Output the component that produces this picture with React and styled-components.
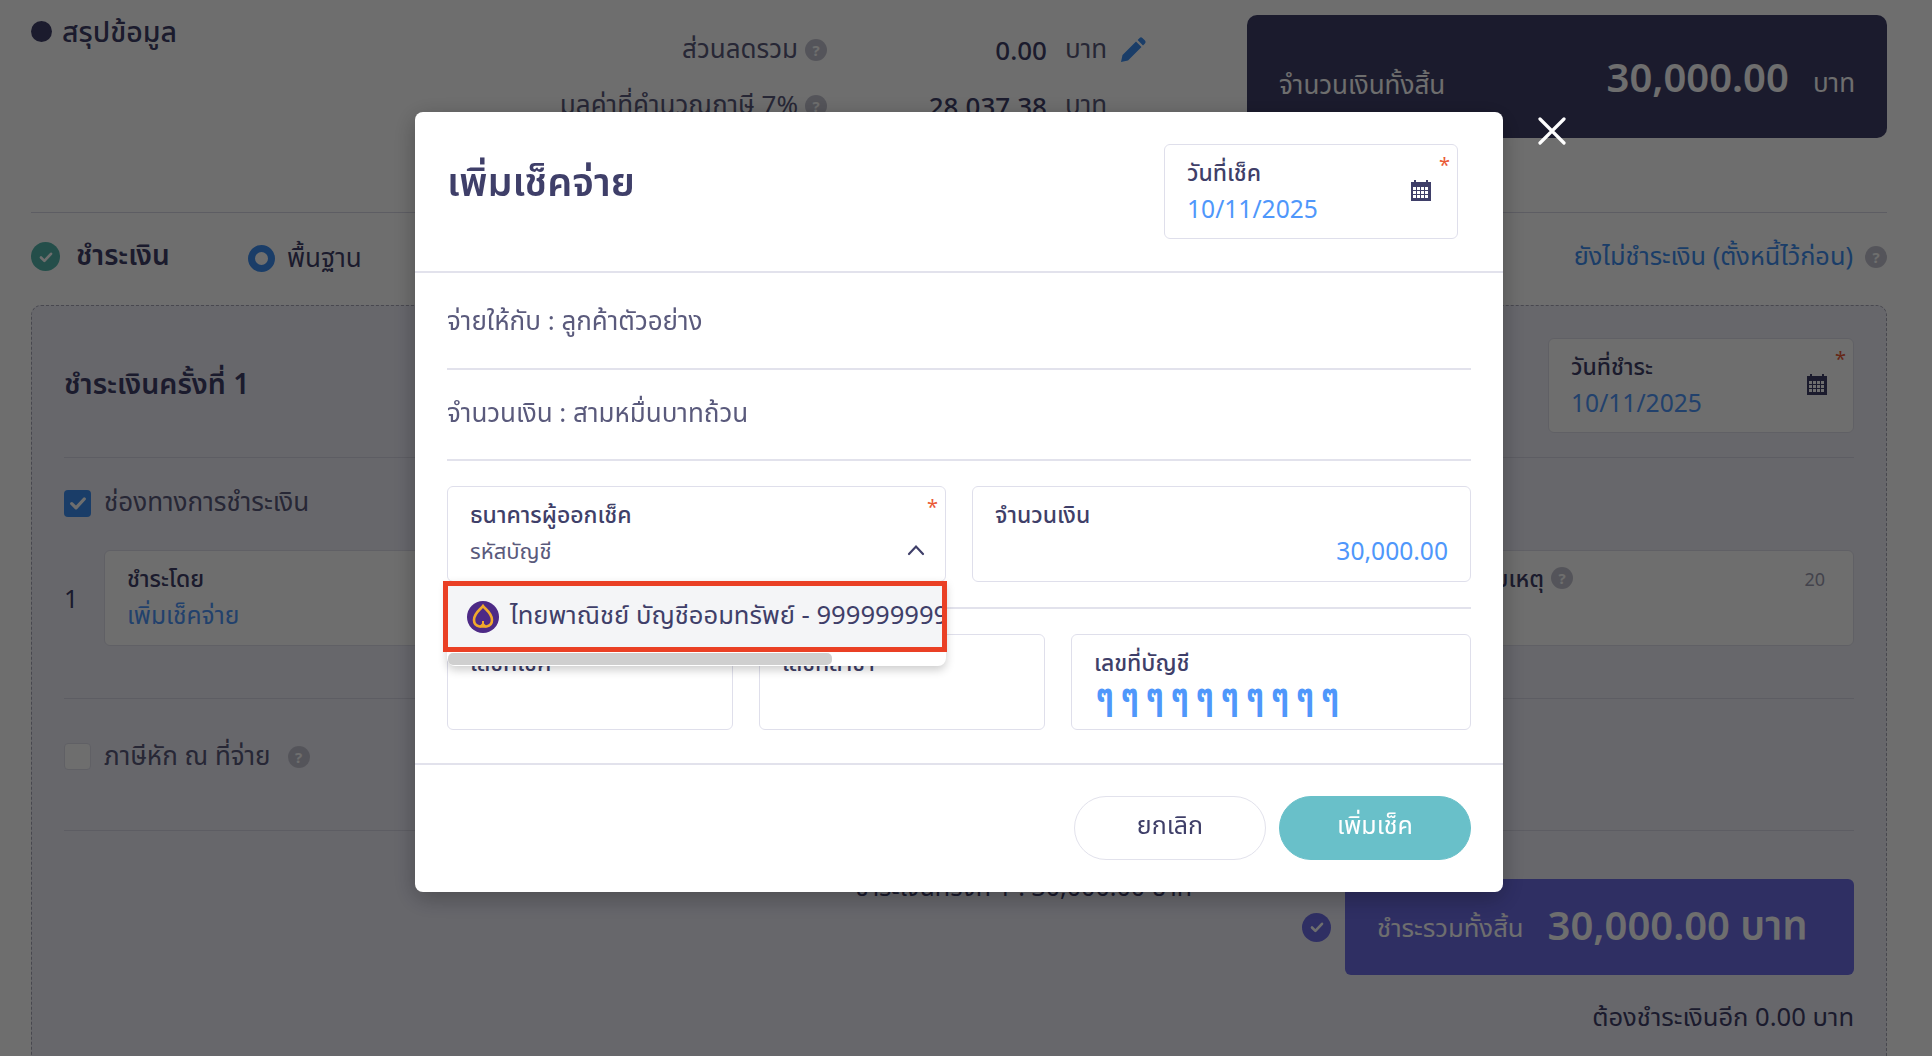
import React from 'react';
import styled, { createGlobalStyle } from 'styled-components';

const GlobalStyle = createGlobalStyle`
  html, body {
    margin: 0;
    padding: 0;
    height: 100%;
    overflow: hidden;
    background: #fff;
    font-family: 'Noto Sans', 'Noto Sans Thai', sans-serif;
    color: #3f3f69;
  }
`;

const Page = styled.div`
  width: 1932px;
  height: 1056px;
  overflow: hidden;
  padding: 15px 45px 0 31px;
  box-sizing: border-box;
`;

const Summary = styled.section`
  display: flex;
  height: 198px;
  box-sizing: border-box;
  border-bottom: 1px solid #d8d8e6;
`;

const SummaryTitle = styled.div`
  display: flex;
  flex: none;
  align-items: center;
  gap: 10px;
  height: 32px;
  font-size: 28.5px;
  font-weight: 500;
  line-height: 32px;
  white-space: nowrap;
`;

const Dot = styled.span`
  width: 21px;
  height: 21px;
  border-radius: 50%;
  background: #3f3f69;
`;

const SummaryRows = styled.div`
  margin-left: auto;
  margin-right: 100px;
  display: flex;
  flex-direction: column;
  gap: 26px;
  padding-top: 15px;
`;

const SummaryRow = styled.div`
  display: grid;
  grid-template-columns: 400px 29px 220px 72px 28px;
  align-items: center;
  height: 30px;
  font-size: 26px;
  color: #5a5a7c;
`;

const RowLabel = styled.span`
  text-align: right;
  white-space: nowrap;
`;

const RowValue = styled.span`
  text-align: right;
  font-weight: 500;
  color: #3f3f69;
`;

const RowUnit = styled.span`
  padding-left: 18px;
`;

const Help = styled.span`
  display: inline-flex;
  align-items: center;
  justify-content: center;
  flex: none;
  width: 22px;
  height: 22px;
  margin-left: ${props => props.$gap || 7}px;
  border-radius: 50%;
  background: #c4c4d0;
  color: #fff;
  font-size: 15px;
  font-weight: 700;
`;

const TotalPanel = styled.div`
  display: flex;
  flex: none;
  align-items: center;
  justify-content: space-between;
  width: 640px;
  height: 123px;
  box-sizing: border-box;
  padding: 0 32px;
  border-radius: 10px;
  background: #3f3f69;
  color: #fff;
`;

const TotalLabel = styled.span`
  font-size: 26px;
  padding-top: 18px;
`;

const TotalAmount = styled.span`
  display: flex;
  align-items: baseline;
  gap: 24px;
  font-size: 40px;
  font-weight: 600;
  small {
    font-size: 26px;
    font-weight: 400;
  }
`;

const PayHead = styled.div`
  display: flex;
  align-items: center;
  height: 92px;
  box-sizing: border-box;
  padding-bottom: 5px;
`;

const StepCheck = styled.span`
  display: inline-flex;
  flex: none;
  align-items: center;
  justify-content: center;
  width: 29px;
  height: 29px;
  border-radius: 50%;
  background: ${props => props.$color || '#54b6ac'};
`;

const StepTitle = styled.span`
  margin-left: 16px;
  width: 172px;
  font-size: 28px;
  font-weight: 600;
`;

const Radio = styled.span`
  width: 13px;
  height: 13px;
  margin-top: 3px;
  border: 7px solid #3d8ef0;
  border-radius: 50%;
  background: #fff;
`;

const RadioLabel = styled.span`
  margin-left: 12px;
  padding-top: 4px;
  font-size: 26px;
`;

const PayLink = styled.span`
  margin-left: auto;
  font-size: 25.3px;
  color: #3d8ef0;
`;

const PayCard = styled.section`
  height: 900px;
  box-sizing: border-box;
  padding: 32px;
  border: 1px dashed #a8a8b8;
  border-radius: 10px;
  background: #eeeef9;
`;

const CardHead = styled.div`
  display: flex;
  align-items: center;
  justify-content: space-between;
  padding-bottom: 24px;
  border-bottom: 1px solid #d8d8e6;
`;

const CardTitle = styled.span`
  font-size: 28.5px;
  font-weight: 600;
`;

const Box = styled.div`
  position: relative;
  box-sizing: border-box;
  padding: 12px 22px;
  height: ${props => props.$h || 96}px;
  width: ${props => (props.$w ? `${props.$w}px` : 'auto')};
  flex: ${props => props.$flex || 'none'};
  margin-left: ${props => props.$left || 0}px;
  border: 1px solid #dfdfeb;
  border-radius: 6px;
  background: #fff;
`;

const BoxLabel = styled.div`
  display: flex;
  align-items: center;
  font-size: 23px;
  line-height: 30px;
  font-weight: 500;
  color: #3f3f69;
  white-space: nowrap;
`;

const BoxValue = styled.div`
  margin-top: 6px;
  font-size: 24.6px;
  line-height: 32px;
  color: #4f97fb;
  white-space: nowrap;
  text-align: ${props => props.$align || 'left'};
`;

const Star = styled.span`
  position: absolute;
  top: 8px;
  right: 7px;
  font-size: 20px;
  line-height: 24px;
  color: #ea5a36;
`;

const CalendarWrap = styled.span`
  position: absolute;
  right: 26px;
  top: 34px;
  width: 20px;
  height: 22px;
`;

const CheckRow = styled.div`
  display: flex;
  align-items: center;
  gap: 13px;
  height: 60px;
  margin-top: 15px;
  font-size: 26px;
  color: #5a5a7c;
`;

const CheckBox = styled.span`
  display: inline-flex;
  align-items: center;
  justify-content: center;
  width: 27px;
  height: 27px;
  box-sizing: border-box;
  border-radius: 4px;
  background: ${props => (props.$on ? '#3d8ef0' : '#fff')};
  border: ${props => (props.$on ? 'none' : '1px solid #dfdfeb')};
`;

const MethodRow = styled.div`
  display: flex;
  align-items: center;
  height: 96px;
  margin-top: 17px;
  font-size: 25px;
`;

const MethodIndex = styled.span`
  width: 40px;
`;

const Hint = styled.span`
  position: absolute;
  top: 16px;
  right: 28px;
  font-size: 18px;
  color: #9c9cb0;
`;

const Rule = styled.div`
  height: 1px;
  margin-top: ${props => props.$top || 0}px;
  background: #d8d8e6;
`;

const TaxRow = styled(CheckRow)`
  height: 131px;
  margin-top: 0;
  padding-bottom: 16px;
  box-sizing: border-box;
`;

const TotalsArea = styled.div`
  display: flex;
  justify-content: flex-end;
  align-items: center;
  gap: 14px;
  margin-top: 48px;
`;

const PaidNote = styled.span`
  align-self: flex-start;
  margin: -10px 96px 0 0;
  font-size: 25px;
`;

const PaidBox = styled.div`
  display: flex;
  align-items: center;
  gap: 24px;
  box-sizing: border-box;
  width: 509px;
  height: 96px;
  padding: 0 32px;
  border-radius: 6px;
  background: #6d6de6;
  color: #fff;
`;

const PaidLabel = styled.span`
  font-size: 25.7px;
  padding-top: 4px;
`;

const PaidAmount = styled.span`
  font-size: 40px;
  font-weight: 600;
`;

const Remain = styled.div`
  margin-top: 24px;
  text-align: right;
  font-size: 25.6px;
`;

const Overlay = styled.div`
  position: fixed;
  inset: 0;
  background: rgba(0, 0, 0, 0.57);
`;

const CloseBtn = styled.span`
  position: fixed;
  left: 1538px;
  top: 117px;
  width: 28px;
  height: 28px;
`;

const Modal = styled.div`
  position: fixed;
  left: 415px;
  top: 112px;
  width: 1088px;
  height: 780px;
  display: flex;
  flex-direction: column;
  border-radius: 8px;
  background: #fff;
  box-shadow: 0 6px 24px rgba(0, 0, 0, 0.28);
`;

const ModalHead = styled.header`
  display: flex;
  justify-content: space-between;
  height: 161px;
  box-sizing: border-box;
  padding: 32px 45px 0 32px;
  border-bottom: 2px solid #e2e2ec;
`;

const ModalTitle = styled.h2`
  margin: 0;
  padding-top: 5px;
  font-size: 39.5px;
  line-height: 64px;
  font-weight: 600;
  color: #3f3f69;
`;

const ModalBody = styled.div`
  flex: 1;
  padding: 0 32px;
`;

const InfoLine = styled.div`
  display: flex;
  align-items: center;
  box-sizing: border-box;
  height: ${props => props.$h || 90}px;
  padding: ${props => props.$pad || 0};
  border-bottom: 2px solid #e2e2ec;
  font-size: 26px;
  color: #5a5a7c;
`;

const FieldRow = styled.div`
  display: flex;
  gap: 26px;
  padding: ${props => props.$pad || '25px 0 0'};
  border-bottom: ${props => (props.$rule ? '2px solid #e2e2ec' : 'none')};
`;

const Chevron = styled.span`
  position: absolute;
  right: 20px;
  top: 52px;
  width: 18px;
  height: 12px;
`;

const PlainValue = styled.div`
  margin-top: 6px;
  font-size: 22px;
  line-height: 30px;
  color: #5a5a7c;
`;

const Dropdown = styled.div`
  position: absolute;
  left: -1px;
  right: -1px;
  top: 94px;
  z-index: 2;
  height: 85px;
  border-radius: 0 0 8px 8px;
  background: #fff;
  box-shadow: 0 4px 10px rgba(0, 0, 0, 0.2);
`;

const DropItem = styled.div`
  position: absolute;
  left: -4px;
  right: -1px;
  top: 0;
  display: flex;
  align-items: center;
  gap: 11px;
  height: 71px;
  box-sizing: border-box;
  padding-left: 19px;
  overflow: hidden;
  border: 5px solid #ea4025;
  background: #f4f5f7;
  font-size: 25.6px;
  color: #3f3f69;
  white-space: nowrap;
`;

const ScrollThumb = styled.div`
  position: absolute;
  left: 1px;
  bottom: 1px;
  width: 384px;
  height: 12px;
  border-radius: 5px;
  background: #cfcfcf;
`;

const Marks = styled.div`
  margin: 0 0 0 2px;
  font-size: 27px;
  line-height: 36px;
  letter-spacing: 7.5px;
  font-weight: 800;
  color: #4f97fb;
  white-space: nowrap;
  transform: scaleY(1.35);
  transform-origin: left center;
`;

const ModalFoot = styled.footer`
  display: flex;
  justify-content: flex-end;
  gap: 13px;
  height: 129px;
  box-sizing: border-box;
  padding: 31px 32px 0;
  border-top: 2px solid #e2e2ec;
`;

const Button = styled.button`
  width: 192px;
  height: 64px;
  padding: 0 0 4px;
  border: 1px solid ${props => (props.$primary ? '#69c0c9' : '#e2e2ec')};
  border-radius: 32px;
  background: ${props => (props.$primary ? '#69c0c9' : '#fff')};
  color: ${props => (props.$primary ? '#fff' : '#3f3f69')};
  font-family: inherit;
  font-size: 25px;
`;

const LogoSvg = styled.svg`
  flex: none;
`;

const Calendar = () => (
  <svg width="20" height="22" viewBox="0 0 20 22">
    <path fill="#3f3f69" d="M0 3h3V1h2v2h10V1h2v2h3v19H0z" />
    <g fill="#fff">
      {[8, 12, 16].map(y =>
        [2, 6, 10, 14].map(x => <rect key={`${x}-${y}`} x={x} y={y} width="3" height="3" />)
      )}
    </g>
  </svg>
);

const Tick = ({ size = 16, color = '#fff', width = 2.6 }) => (
  <svg width={size} height={size} viewBox="0 0 16 16">
    <path d="M3 8.5l3.4 3.4L13 4.8" fill="none" stroke={color} strokeWidth={width} strokeLinecap="round" strokeLinejoin="round" />
  </svg>
);

const Pencil = () => (
  <svg width="28" height="28" viewBox="0 0 28 28">
    <path fill="#3d8ef0" d="M2 26l1.5-7L17 5.5l5.5 5.5L9 24.5zM18.6 4l2-2a2 2 0 0 1 2.8 0l2.6 2.6a2 2 0 0 1 0 2.8l-2 2z" />
  </svg>
);

const BankLogo = () => (
  <LogoSvg width="32" height="32" viewBox="0 0 32 32">
    <circle cx="16" cy="16" r="16" fill="#4d2a86" />
    <path d="M16 5C19 9 25 12 25 19C25 23 22 25 19.5 25.5L12.5 25.5C10 25 7 23 7 19C7 12 13 9 16 5z" fill="none" stroke="#f0a92c" strokeWidth="2.6" />
    <path d="M16 20v6M13 26l3-3 3 3" fill="none" stroke="#f0a92c" strokeWidth="2" />
  </LogoSvg>
);

const App = () => (
  <>
    <GlobalStyle />
    <Page>
      <Summary>
        <SummaryTitle><Dot />สรุปข้อมูล</SummaryTitle>
        <SummaryRows>
          <SummaryRow>
            <RowLabel>ส่วนลดรวม</RowLabel>
            <Help>?</Help>
            <RowValue>0.00</RowValue>
            <RowUnit>บาท</RowUnit>
            <Pencil />
          </SummaryRow>
          <SummaryRow>
            <RowLabel>มูลค่าที่คำนวณภาษี 7%</RowLabel>
            <Help>?</Help>
            <RowValue>28,037.38</RowValue>
            <RowUnit>บาท</RowUnit>
          </SummaryRow>
        </SummaryRows>
        <TotalPanel>
          <TotalLabel>จำนวนเงินทั้งสิ้น</TotalLabel>
          <TotalAmount>30,000.00 <small>บาท</small></TotalAmount>
        </TotalPanel>
      </Summary>
      <PayHead>
        <StepCheck><Tick /></StepCheck>
        <StepTitle>ชำระเงิน</StepTitle>
        <Radio />
        <RadioLabel>พื้นฐาน</RadioLabel>
        <PayLink>ยังไม่ชำระเงิน (ตั้งหนี้ไว้ก่อน)</PayLink>
        <Help $gap={12}>?</Help>
      </PayHead>
      <PayCard>
        <CardHead>
          <CardTitle>ชำระเงินครั้งที่ 1</CardTitle>
          <Box $w={306} $h={95}>
            <BoxLabel>วันที่ชำระ</BoxLabel>
            <BoxValue>10/11/2025</BoxValue>
            <Star>*</Star>
            <CalendarWrap><Calendar /></CalendarWrap>
          </Box>
        </CardHead>
        <CheckRow>
          <CheckBox $on><Tick size={20} /></CheckBox>
          ช่องทางการชำระเงิน
        </CheckRow>
        <MethodRow>
          <MethodIndex>1</MethodIndex>
          <Box $flex="1">
            <BoxLabel>ชำระโดย</BoxLabel>
            <BoxValue>เพิ่มเช็คจ่าย</BoxValue>
          </Box>
          <Box $w={420} $left={20}>
            <BoxLabel>หมายเหตุ <Help>?</Help></BoxLabel>
            <Hint>20</Hint>
          </Box>
        </MethodRow>
        <Rule $top={52} />
        <TaxRow>
          <CheckBox />
          ภาษีหัก ณ ที่จ่าย
          <Help $gap={4}>?</Help>
        </TaxRow>
        <Rule />
        <TotalsArea>
          <PaidNote>ชำระเงินครั้งที่ 1 : 30,000.00 บาท</PaidNote>
          <StepCheck $color="#6d6de6"><Tick /></StepCheck>
          <PaidBox>
            <PaidLabel>ชำระรวมทั้งสิ้น</PaidLabel>
            <PaidAmount>30,000.00 บาท</PaidAmount>
          </PaidBox>
        </TotalsArea>
        <Remain>ต้องชำระเงินอีก 0.00 บาท</Remain>
      </PayCard>
    </Page>
    <Overlay />
    <CloseBtn>
      <svg width="28" height="28" viewBox="0 0 28 28">
        <path d="M2 2l24 24M26 2L2 26" stroke="#fff" strokeWidth="3.2" strokeLinecap="round" />
      </svg>
    </CloseBtn>
    <Modal>
      <ModalHead>
        <ModalTitle>เพิ่มเช็คจ่าย</ModalTitle>
        <Box $w={294} $h={95}>
          <BoxLabel>วันที่เช็ค</BoxLabel>
          <BoxValue>10/11/2025</BoxValue>
          <Star>*</Star>
          <CalendarWrap><Calendar /></CalendarWrap>
        </Box>
      </ModalHead>
      <ModalBody>
        <InfoLine $h={97} $pad="3px 0 0">จ่ายให้กับ : ลูกค้าตัวอย่าง</InfoLine>
        <InfoLine $h={91} $pad="0 0 2px">จำนวนเงิน : สามหมื่นบาทถ้วน</InfoLine>
        <FieldRow $pad="25px 0" $rule>
          <Box $flex="0 0 499px">
            <BoxLabel>ธนาคารผู้ออกเช็ค</BoxLabel>
            <PlainValue>รหัสบัญชี</PlainValue>
            <Star>*</Star>
            <Chevron>
              <svg width="18" height="12" viewBox="0 0 18 12">
                <path d="M2 10l7-7.5 7 7.5" fill="none" stroke="#3f3f69" strokeWidth="2.2" strokeLinecap="round" />
              </svg>
            </Chevron>
            <Dropdown>
              <DropItem>
                <BankLogo />
                ไทยพาณิชย์ บัญชีออมทรัพย์ - 9999999999
              </DropItem>
              <ScrollThumb />
            </Dropdown>
          </Box>
          <Box $flex="1">
            <BoxLabel>จำนวนเงิน</BoxLabel>
            <BoxValue $align="right">30,000.00</BoxValue>
          </Box>
        </FieldRow>
        <FieldRow>
          <Box $flex="0 0 286px">
            <BoxLabel>เลขที่เช็ค</BoxLabel>
          </Box>
          <Box $flex="0 0 286px">
            <BoxLabel>เลขที่สาขา</BoxLabel>
          </Box>
          <Box $flex="1">
            <BoxLabel>เลขที่บัญชี</BoxLabel>
            <Marks>ๆๆๆๆๆๆๆๆๆๆ</Marks>
          </Box>
        </FieldRow>
      </ModalBody>
      <ModalFoot>
        <Button>ยกเลิก</Button>
        <Button $primary>เพิ่มเช็ค</Button>
      </ModalFoot>
    </Modal>
  </>
);

export default App;
